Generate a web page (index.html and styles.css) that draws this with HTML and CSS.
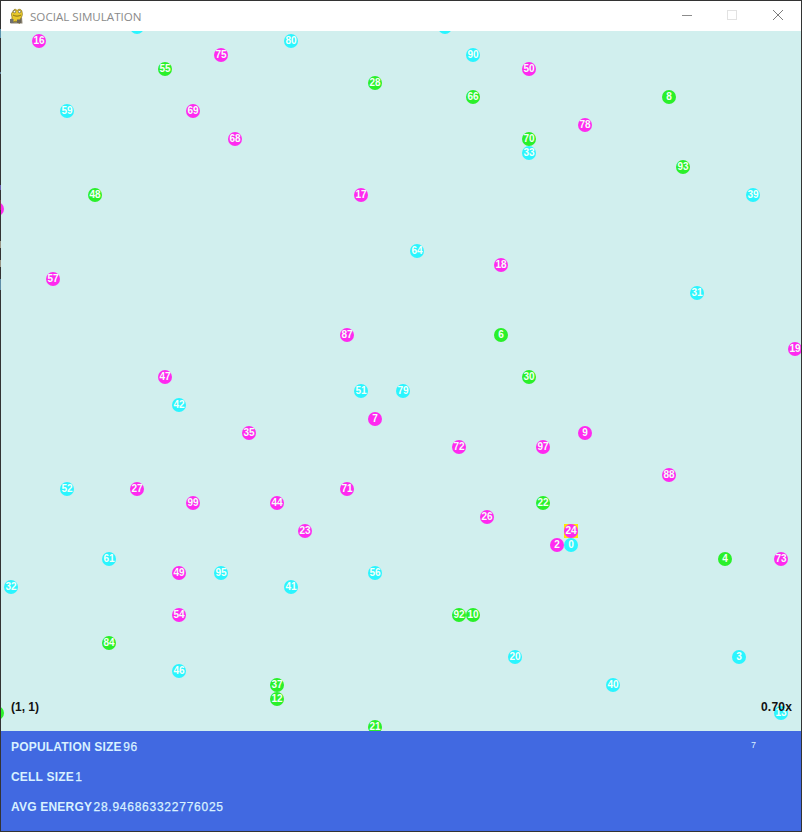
FILE: index.html
```html
<!DOCTYPE html>
<html lang="en">
<head>
<meta charset="utf-8">
<title>SOCIAL SIMULATION</title>
<link rel="stylesheet" href="styles.css">
</head>
<body>
<div class="window">
  <header class="titlebar">
    <svg class="app-icon" viewBox="0 0 16 16" width="16" height="16" aria-hidden="true">
      <path d="M1.5 15.5 L1 11.5 L5 9.5 L13 9.5 L13.5 15.5 Z" fill="#8a8270"/>
      <path d="M3 14.5 L3 9 C2 6 2.5 4 4 4 C4 1 7 0.5 8 2.5 C9.5 0.5 13 1 13 4 C14 6 13 9 11.5 10.5 L10.5 15.5 L7 13 Z" fill="#e8c92c" stroke="#8a7412" stroke-width="0.7"/>
      <circle cx="5.5" cy="3.6" r="1.2" fill="#fff" stroke="#333" stroke-width="0.5"/>
      <circle cx="10.5" cy="3.6" r="1.2" fill="#fff" stroke="#333" stroke-width="0.5"/>
      <path d="M4 7 C6 8.5 10 8.5 12 7" fill="none" stroke="#6d5a10" stroke-width="0.8"/>
      <rect x="1" y="11" width="3.5" height="4" fill="#6f6f6f"/>
      <rect x="8" y="11.5" width="4" height="3.5" fill="#6a655a"/>
    </svg>
    <span class="title">SOCIAL SIMULATION</span>
    <div class="controls">
      <svg class="ctl" viewBox="0 0 46 30" width="46" height="30" aria-hidden="true"><path d="M20 14.5 H30" stroke="#8c8c8c" fill="none"/></svg>
      <svg class="ctl" viewBox="0 0 46 30" width="46" height="30" aria-hidden="true"><rect x="19.5" y="9.5" width="9" height="9" stroke="#e2e2e2" fill="none"/></svg>
      <svg class="ctl" viewBox="0 0 46 30" width="46" height="30" aria-hidden="true"><path d="M19 9 L29 19 M29 9 L19 19" stroke="#7c7c7c" fill="none"/></svg>
    </div>
  </header>
  <main class="canvas">
    <span class="node c" style="left:129px;top:-11px"></span>
    <span class="node m" style="left:31px;top:3px">16</span>
    <span class="node c" style="left:283px;top:3px">80</span>
    <span class="node m" style="left:213px;top:17px">75</span>
    <span class="node g" style="left:157px;top:31px">55</span>
    <span class="node g" style="left:367px;top:45px">28</span>
    <span class="node c" style="left:59px;top:73px">59</span>
    <span class="node m" style="left:185px;top:73px">69</span>
    <span class="node m" style="left:227px;top:101px">68</span>
    <span class="node g" style="left:87px;top:157px">48</span>
    <span class="node m" style="left:353px;top:157px">17</span>
    <span class="node m" style="left:-11px;top:171px"></span>
    <span class="node c" style="left:437px;top:-11px"></span>
    <span class="node c" style="left:465px;top:17px">90</span>
    <span class="node m" style="left:521px;top:31px">50</span>
    <span class="node g" style="left:465px;top:59px">66</span>
    <span class="node g" style="left:661px;top:59px">8</span>
    <span class="node m" style="left:577px;top:87px">78</span>
    <span class="node g" style="left:521px;top:101px">70</span>
    <span class="node c" style="left:521px;top:115px">33</span>
    <span class="node g" style="left:675px;top:129px">93</span>
    <span class="node c" style="left:745px;top:157px">39</span>
    <span class="node c" style="left:409px;top:213px">64</span>
    <span class="node m" style="left:493px;top:227px">18</span>
    <span class="node m" style="left:45px;top:241px">57</span>
    <span class="node c" style="left:689px;top:255px">31</span>
    <span class="node m" style="left:339px;top:297px">87</span>
    <span class="node g" style="left:493px;top:297px">6</span>
    <span class="node m" style="left:787px;top:311px">19</span>
    <span class="node m" style="left:157px;top:339px">47</span>
    <span class="node g" style="left:521px;top:339px">30</span>
    <span class="node c" style="left:353px;top:353px">51</span>
    <span class="node c" style="left:395px;top:353px">79</span>
    <span class="node c" style="left:171px;top:367px">42</span>
    <span class="node m" style="left:367px;top:381px">7</span>
    <span class="node m" style="left:241px;top:395px">35</span>
    <span class="node m" style="left:577px;top:395px">9</span>
    <span class="node m" style="left:451px;top:409px">72</span>
    <span class="node m" style="left:535px;top:409px">97</span>
    <span class="node m" style="left:661px;top:437px">88</span>
    <span class="node c" style="left:59px;top:451px">52</span>
    <span class="node m" style="left:129px;top:451px">27</span>
    <span class="node m" style="left:339px;top:451px">71</span>
    <span class="node m" style="left:185px;top:465px">99</span>
    <span class="node m" style="left:269px;top:465px">44</span>
    <span class="node g" style="left:535px;top:465px">22</span>
    <span class="node m" style="left:297px;top:493px">23</span>
    <span class="node m" style="left:479px;top:479px">26</span>
    <span class="mark" style="left:563px;top:493px"></span>
    <span class="node m" style="left:563px;top:493px">24</span>
    <span class="node m" style="left:549px;top:507px">2</span>
    <span class="node c" style="left:563px;top:507px">0</span>
    <span class="node g" style="left:717px;top:521px">4</span>
    <span class="node m" style="left:773px;top:521px">73</span>
    <span class="node c" style="left:101px;top:521px">61</span>
    <span class="node m" style="left:171px;top:535px">49</span>
    <span class="node c" style="left:213px;top:535px">95</span>
    <span class="node c" style="left:367px;top:535px">56</span>
    <span class="node c" style="left:3px;top:549px">32</span>
    <span class="node c" style="left:283px;top:549px">41</span>
    <span class="node m" style="left:171px;top:577px">54</span>
    <span class="node g" style="left:451px;top:577px">92</span>
    <span class="node g" style="left:465px;top:577px">10</span>
    <span class="node g" style="left:101px;top:605px">84</span>
    <span class="node c" style="left:171px;top:633px">46</span>
    <span class="node c" style="left:507px;top:619px">20</span>
    <span class="node c" style="left:731px;top:619px">3</span>
    <span class="node c" style="left:605px;top:647px">40</span>
    <span class="node g" style="left:269px;top:647px">37</span>
    <span class="node g" style="left:269px;top:661px">12</span>
    <span class="node g" style="left:-11px;top:675px"></span>
    <span class="node c" style="left:773px;top:675px">13</span>
    <span class="node g" style="left:367px;top:689px">21</span>
    <span class="coord">(1, 1)</span>
    <span class="speed">0.70x</span>
  </main>
  <footer class="panel">
    <p class="stat"><b>POPULATION SIZE</b> <span class="val">96</span></p>
    <p class="stat"><b>CELL SIZE</b> <span class="val">1</span></p>
    <p class="stat"><b>AVG ENERGY</b> <span class="val">28.946863322776025</span></p>
    <span class="tiny">7</span>
  </footer>
</div>
</body>
</html>
```
FILE: styles.css
```css
* { box-sizing: border-box; }
html, body { margin: 0; height: 100%; }
body {
  background-color: #333;
  background-image: linear-gradient(#333 0 29px, #5b93ad 29px 38px, #333 38px 72px, #5f7f95 72px 74px, #333 74px 185px, #6a5fb0 185px 190px, #333 190px 200px, #7a3b4a 200px 210px, #333 210px 241px, #9a9585 241px 248px, #333 248px 260px, #9a9585 260px 267px, #333 267px 279px, #5f8ea8 279px 290px, #333 290px);
  background-size: 1px 100%;
  background-repeat: no-repeat;
  overflow: hidden;
  font-family: "Liberation Sans", Arial, sans-serif;
}
.window {
  width: 800px;
  height: 830px;
  margin: 1px;
  display: flex;
  flex-direction: column;
}
.titlebar {
  height: 30px;
  flex: none;
  background: #fff;
  display: flex;
  align-items: center;
  padding-left: 8px;
}
.app-icon { flex: none; margin-right: 5px; }
.title {
  font: 11.6px "Open Sans", sans-serif;
  color: #8a8a8a;
}
.controls { margin-left: auto; display: flex; margin-right: 1px; }
.ctl { display: block; }
.canvas {
  position: relative;
  flex: none;
  height: 700px;
  background: #d1efee;
  overflow: hidden;
}
.node {
  position: absolute;
  width: 14px;
  height: 14px;
  border-radius: 50%;
  font-size: 10px;
  font-weight: 700;
  line-height: 14px;
  text-align: center;
  color: #f4fff8;
}
.m { background: #ff2af0; }
.c { background: #2af5ff; }
.g { background: #2af02a; }
.mark {
  position: absolute;
  width: 14px;
  height: 14px;
  background: #ffe800;
}
.coord, .speed {
  position: absolute;
  top: 669px;
  font-size: 12px;
  line-height: 14px;
  font-weight: 700;
  color: #111;
}
.coord { left: 10px; }
.speed { left: 760px; letter-spacing: 0.2px; }
.panel {
  position: relative;
  flex: 1;
  background: #4169e1;
  padding: 9px 10px;
  display: flex;
  flex-direction: column;
  gap: 16px;
}
.stat {
  margin: 0;
  font-size: 12px;
  line-height: 14px;
  color: #d8f1ff;
}
.stat b { letter-spacing: 0.2px; }
.val {
  margin-left: -2px;
  font-size: 12px;
  letter-spacing: 0.75px;
  -webkit-text-stroke: 0.25px #d8f1ff;
}
.tiny {
  position: absolute;
  left: 750px;
  top: 9px;
  font-size: 9px;
  line-height: 10px;
  color: #d8f1ff;
}
```
